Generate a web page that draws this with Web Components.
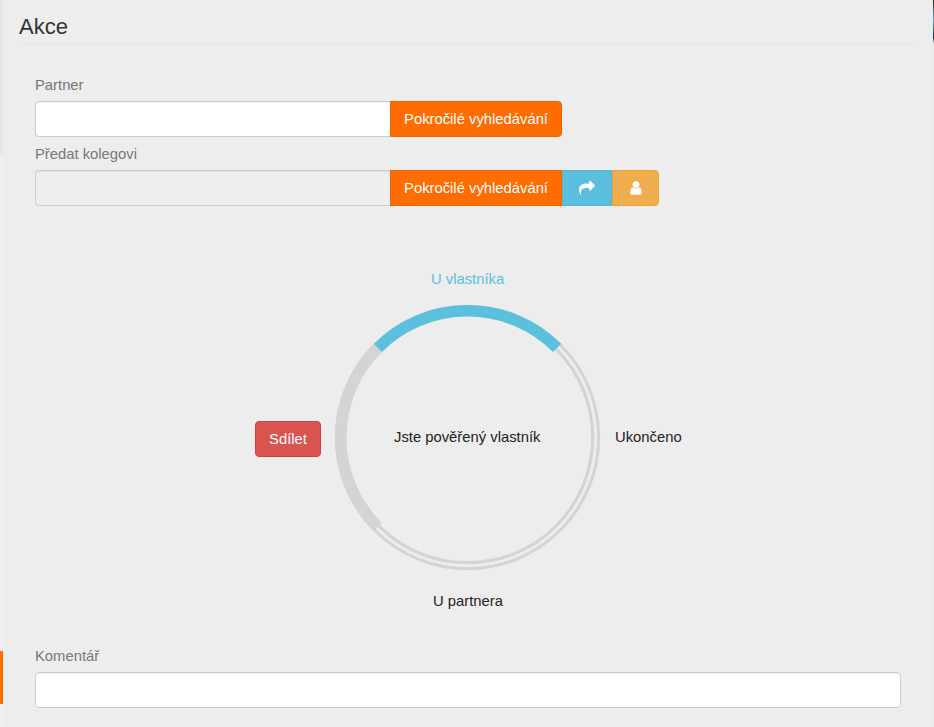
<!DOCTYPE html>
<html>
<head>
<meta charset="utf-8">
<style>
  html, body { margin: 0; height: 100%; overflow: hidden; background: #ededed; }
  body { font-family: "Liberation Sans", Arial, sans-serif; }
</style>
</head>
<body>
<action-panel>
  <panel-heading slot="heading">Akce</panel-heading>
  <form-row label="Partner">
    <search-button></search-button>
  </form-row>
  <form-row label="Předat kolegovi" disabled>
    <search-button flat></search-button>
    <icon-button color="#5bc0de" border="#55b8d8" width="50" icon="share"></icon-button>
    <icon-button color="#f0ad4e" border="#eea236" width="47" icon="user" last></icon-button>
  </form-row>
  <state-ring></state-ring>
  <comment-field label="Komentář"></comment-field>
</action-panel>

<script>
class ActionPanel extends HTMLElement {
    constructor() {
        super();
        this.attachShadow({ mode: 'open' });
        this.shadowRoot.innerHTML = `
        <style>
          :host {
            display: block;
            position: relative;
            box-sizing: border-box;
            height: 727px;
            padding: 0 0 0 3px;
            background: linear-gradient(#e5e5e5 0 155px, #f1f1f1 155px);
          }

          .main {
            box-sizing: border-box;
            height: 727px;
            width: 928px;
            background: #ededed;
            padding: 0 14px 0 16px;
          }

          .body {
            padding: 0 16px;
          }

          .accent {
            position: absolute;
            left: 0;
            top: 651px;
            width: 3px;
            height: 53px;
            background: #ff6c00;
          }

          .edge {
            position: absolute;
            right: 0;
            top: 0;
            width: 3px;
            height: 727px;
            background: #ebebeb;
          }

          .edge::after {
            content: '';
            position: absolute;
            right: 0;
            top: 0;
            width: 1px;
            height: 44px;
            background: linear-gradient(#1d2b30, #49b6c6 45%, #1d2b30 85%, #ebebeb);
          }
        </style>
        <div class="main">
          <slot name="heading"></slot>
          <div class="body"><slot></slot></div>
        </div>
        <div class="accent"></div>
        <div class="edge"></div>
      `;
    }
}

class PanelHeading extends HTMLElement {
    constructor() {
        super();
        this.attachShadow({ mode: 'open' });
        this.shadowRoot.innerHTML = `
        <style>
          :host {
            display: block;
            box-sizing: border-box;
            height: 45px;
            padding-top: 14px;
            font-size: 22px;
            line-height: 26px;
            color: #333;
            border-bottom: 1px solid #e5e5e5;
          }
        </style>
        <slot></slot>
      `;
    }
}

class FormRow extends HTMLElement {
    constructor() {
        super();
        this.attachShadow({ mode: 'open' });
    }

    connectedCallback() {
        const disabled = this.hasAttribute('disabled');
        this.shadowRoot.innerHTML = `
        <style>
          :host {
            display: block;
            height: 69px;
          }

          :host(:first-of-type) {
            margin-top: 29px;
          }

          label {
            display: block;
            height: 27px;
            font-size: 14.8px;
            line-height: 22px;
            color: #777;
          }

          .group {
            display: flex;
            height: 36px;
          }

          input {
            box-sizing: border-box;
            width: 355px;
            height: 36px;
            margin: 0;
            border: 1px solid #ccc;
            border-right: none;
            border-radius: 4px 0 0 4px;
            background: ${disabled ? '#eeeeee' : '#fff'};
            box-shadow: inset 0 1px 1px rgba(0,0,0,.075);
          }
        </style>
        <label>${this.getAttribute('label')}</label>
        <div class="group">
          <input ${disabled ? 'disabled' : ''}>
          <slot></slot>
        </div>
      `;
    }
}

class SearchButton extends HTMLElement {
    constructor() {
        super();
        this.attachShadow({ mode: 'open' });
    }

    connectedCallback() {
        const radius = this.hasAttribute('flat') ? '0' : '0 4px 4px 0';
        this.shadowRoot.innerHTML = `
        <style>
          :host {
            display: block;
          }

          button {
            box-sizing: border-box;
            width: 172px;
            height: 36px;
            padding: 0;
            border: 1px solid #f06500;
            border-radius: ${radius};
            background: #ff6c00;
            color: #fff;
            font: 14.8px "Liberation Sans", Arial, sans-serif;
          }
        </style>
        <button>Pokročilé vyhledávání</button>
      `;
    }
}

const ICONS = {
    share: '<path d="M1792 640q0 26-19 45l-512 512q-19 19-45 19t-45-19-19-45v-256h-224q-98 0-175.5 6t-154 21.5-133 42.5-105.5 69.5-80 101-48.5 138.5-17.5 181q0 55 5 123 0 6 2.5 23.5t2.5 26.5q0 15-8.5 25t-23.5 10q-16 0-28-17-7-9-13-22t-13.5-30-10.5-24q-127-285-127-451 0-199 53-333 162-403 875-403h224v-256q0-26 19-45t45-19 45 19l512 512q19 19 19 45z"/>',
    user: '<path d="M1536 1399q0 109-62.5 187t-150.5 78h-854q-88 0-150.5-78t-62.5-187q0-85 8.5-160.5t31.5-152 58.5-131 94-89 134.5-34.5q131 128 313 128t313-128q76 0 134.5 34.5t94 89 58.5 131 31.5 152 8.5 160.5zm-256-887q0 159-112.5 271.5t-271.5 112.5-271.5-112.5-112.5-271.5 112.5-271.5 271.5-112.5 271.5 112.5 112.5 271.5z"/>'
};

class IconButton extends HTMLElement {
    constructor() {
        super();
        this.attachShadow({ mode: 'open' });
    }

    connectedCallback() {
        const color = this.getAttribute('color');
        const icon = this.getAttribute('icon');
        const last = this.hasAttribute('last');
        this.shadowRoot.innerHTML = `
        <style>
          :host {
            display: flex;
            align-items: center;
            justify-content: center;
            box-sizing: border-box;
            width: ${this.getAttribute('width')}px;
            height: 36px;
            background: ${color};
            border: 1px solid ${this.getAttribute('border')};
            border-radius: ${last ? '0 4px 4px 0' : '0'};
          }

          svg {
            display: block;
            fill: #fff;
          }
        </style>
        <svg width="16" height="16" viewBox="0 0 1792 1792">${ICONS[icon]}</svg>
      `;
    }
}

class StateRing extends HTMLElement {
    constructor() {
        super();
        this.attachShadow({ mode: 'open' });
        this.shadowRoot.innerHTML = `
        <style>
          :host {
            display: block;
            position: relative;
            height: 433px;
          }

          .ring {
            position: absolute;
            left: 299px;
            top: 92px;
            display: block;
          }

          .label {
            position: absolute;
            font-size: 14.8px;
            line-height: 20px;
            color: #222;
            white-space: nowrap;
          }

          .center {
            left: 359px;
            top: 215px;
          }

          .top {
            left: 396px;
            top: 57px;
            color: #5bc0de;
          }

          .right {
            left: 580px;
            top: 215px;
          }

          .bottom {
            left: 398px;
            top: 379px;
          }

          .share {
            position: absolute;
            left: 220px;
            top: 209px;
            box-sizing: border-box;
            width: 66px;
            height: 36px;
            border: 1px solid #d43f3a;
            border-radius: 4px;
            background: #d9534f;
            color: #fff;
            font: 14.8px "Liberation Sans", Arial, sans-serif;
            padding: 0;
          }
        </style>
        <svg class="ring" width="267" height="267" viewBox="0 0 267 267" fill="none">
          <circle cx="133.5" cy="133.5" r="131.2" stroke="#d4d4d4" stroke-width="3"/>
          <circle cx="133.5" cy="133.5" r="125.2" stroke="#d4d4d4" stroke-width="3.2"/>
          <path d="M43.87 223.13A126.75 126.75 0 0 1 43.87 43.87" stroke="#d4d4d4" stroke-width="11.5"/>
          <path d="M43.87 43.87A126.75 126.75 0 0 1 223.13 43.87" stroke="#5bc0de" stroke-width="11.5"/>
        </svg>
        <span class="label center">Jste pověřený vlastník</span>
        <span class="label top">U vlastníka</span>
        <span class="label right">Ukončeno</span>
        <span class="label bottom">U partnera</span>
        <button class="share">Sdílet</button>
      `;
    }
}

class CommentField extends HTMLElement {
    constructor() {
        super();
        this.attachShadow({ mode: 'open' });
    }

    connectedCallback() {
        this.shadowRoot.innerHTML = `
        <style>
          :host {
            display: block;
          }

          label {
            display: block;
            height: 27px;
            font-size: 14.8px;
            line-height: 22px;
            color: #777;
          }

          input {
            display: block;
            box-sizing: border-box;
            width: 866px;
            height: 36px;
            margin: 0;
            border: 1px solid #ccc;
            border-radius: 4px;
            background: #fff;
            box-shadow: inset 0 1px 1px rgba(0,0,0,.075);
          }
        </style>
        <label>${this.getAttribute('label')}</label>
        <input>
      `;
    }
}

customElements.define('action-panel', ActionPanel);
customElements.define('panel-heading', PanelHeading);
customElements.define('form-row', FormRow);
customElements.define('search-button', SearchButton);
customElements.define('icon-button', IconButton);
customElements.define('state-ring', StateRing);
customElements.define('comment-field', CommentField);
</script>
</body>
</html>
